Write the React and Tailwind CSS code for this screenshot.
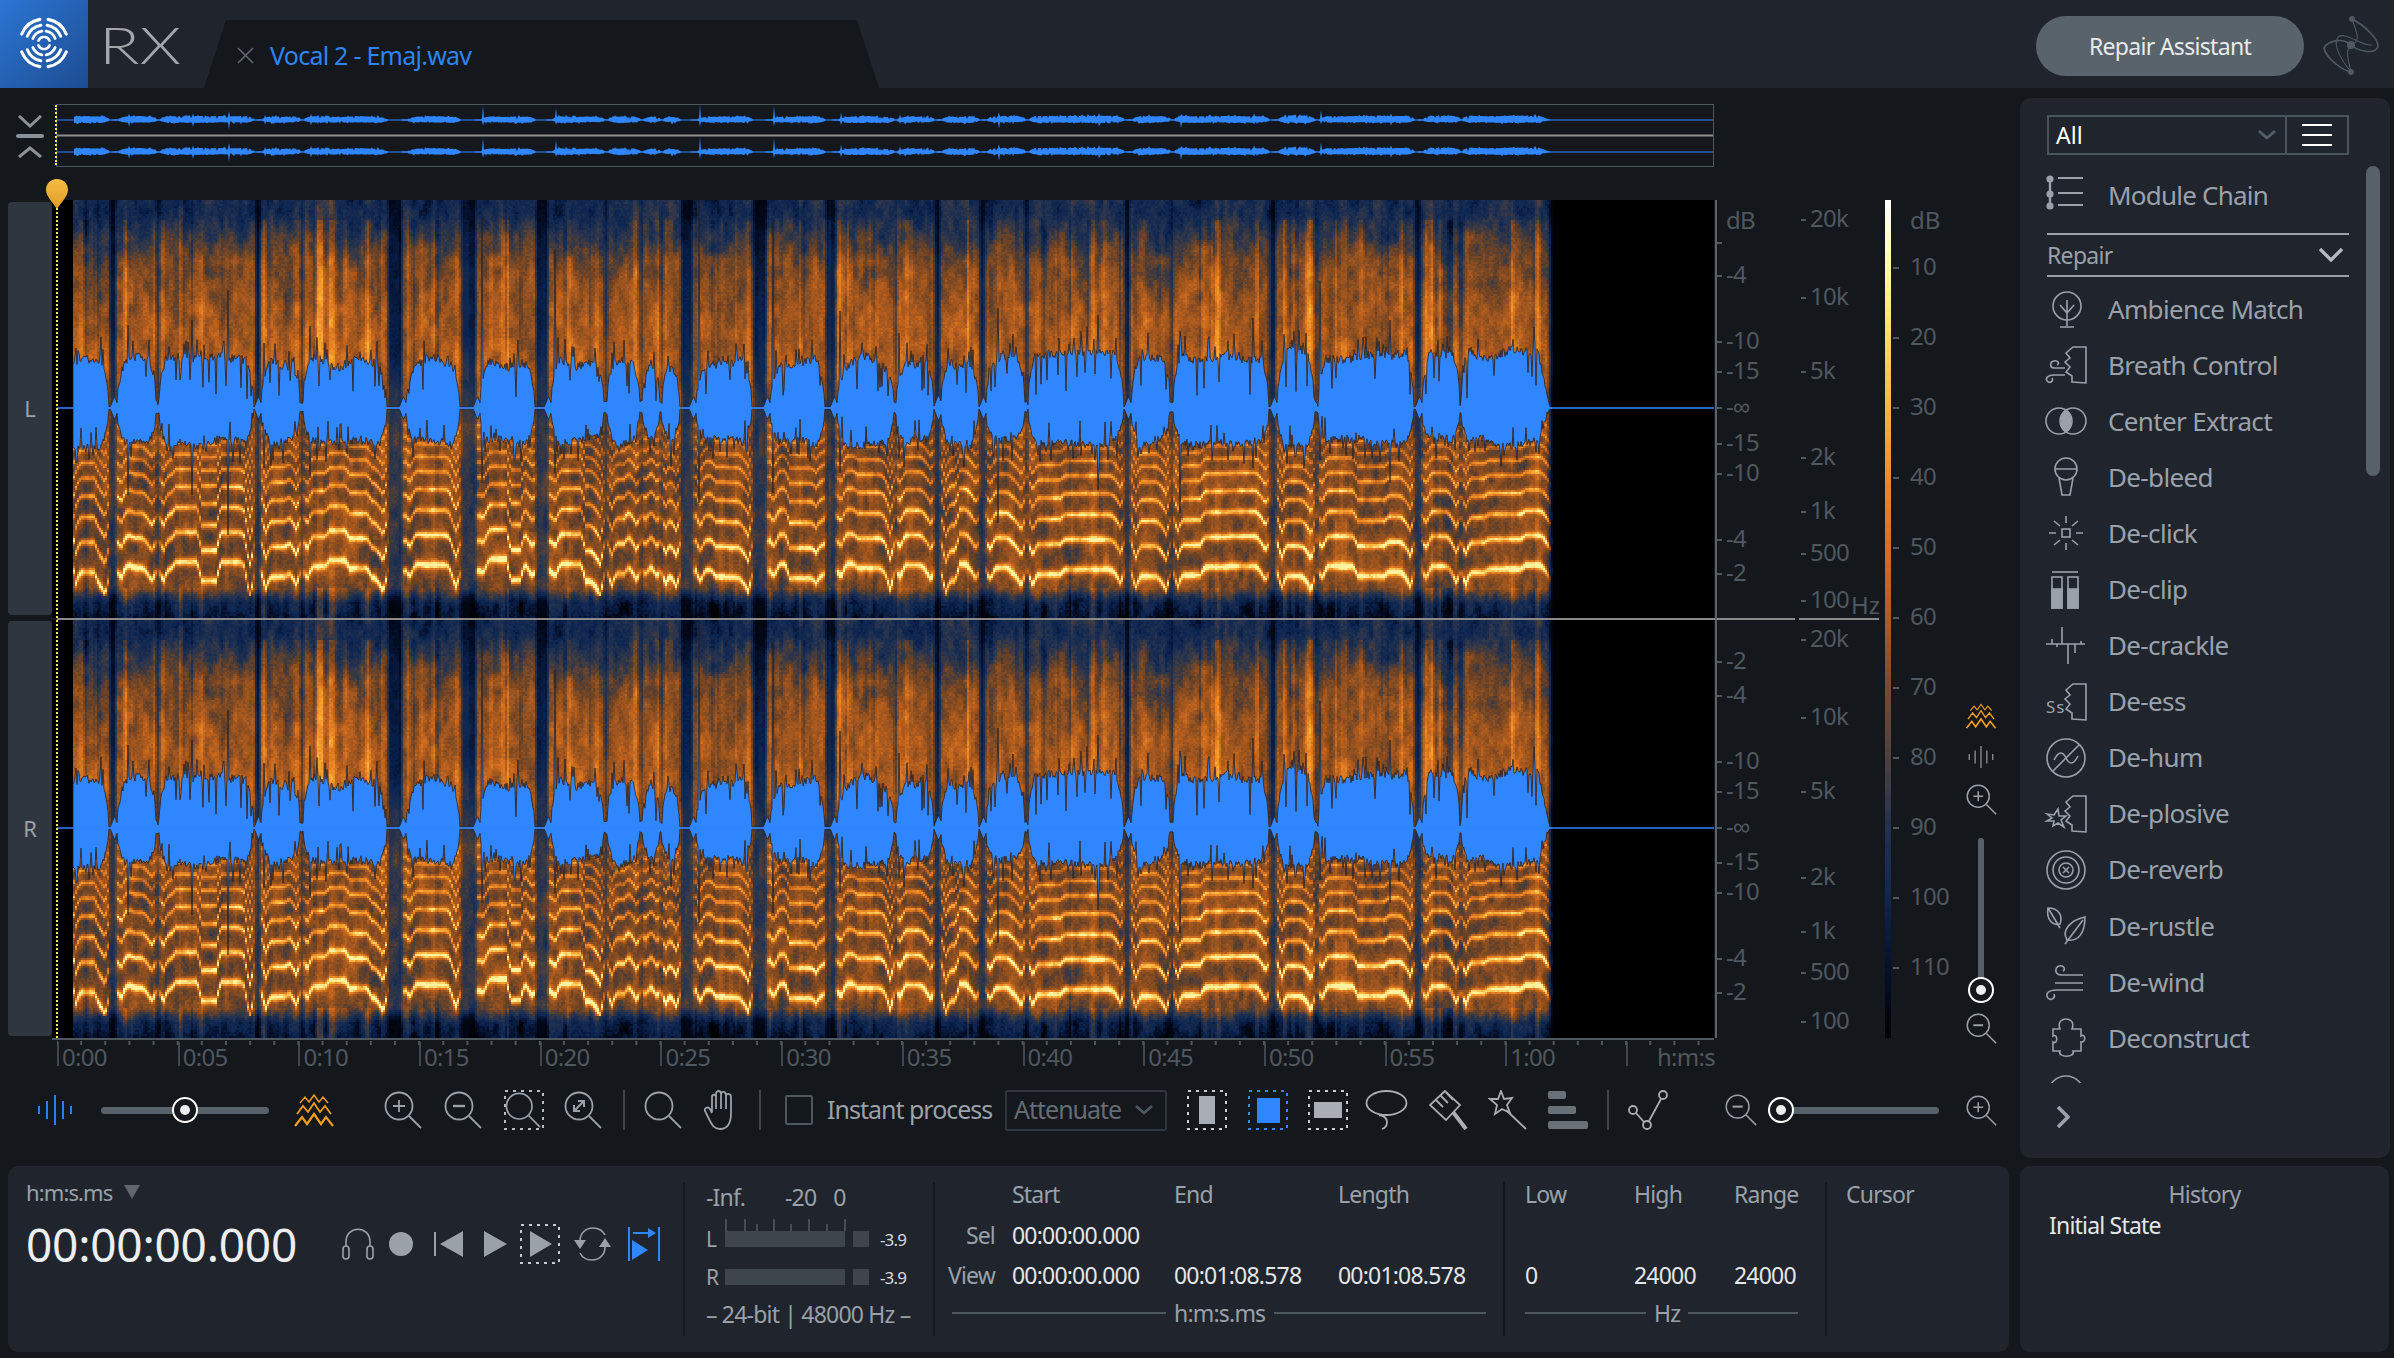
import React from 'react';

// ---------- seeded helpers for the spectrogram drawing ----------
const rnd = (x, y = 0) => {
  const h = Math.sin(x * 127.1 + y * 311.7) * 43758.5453;
  return h - Math.floor(h);
};
const clamp = (v, a = 0, b = 1) => Math.max(a, Math.min(b, v));
const lerp = (a, b, t) => a + (b - a) * t;
const fade = (t) => t * t * (3 - 2 * t);
const noise2 = (x, y) => {
  const xi = Math.floor(x), yi = Math.floor(y);
  const u = fade(x - xi), v = fade(y - yi);
  return lerp(lerp(rnd(xi, yi), rnd(xi + 1, yi), u), lerp(rnd(xi, yi + 1), rnd(xi + 1, yi + 1), u), v);
};

const START = 73;
const END = 1552;
const CENTER = 208;
const CH_H = 418;

// [from, to, depth] dark breaks between sung phrases, in page pixels
const GAPS = [[107,119,1],[154,161,.6],[252,263,1],[298,305,.7],[385,408,1],[458,482,1],[533,553,1],[602,609,.6],[638,644,.6],[658,663,.6],[678,698,1],[750,772,1],[823,839,1],[892,898,.6],[932,943,.9],[977,988,1],[1023,1030,.7],[1122,1133,1],[1168,1175,.7],[1267,1279,1],[1313,1320,.7],[1412,1424,1],[1458,1463,.6]];

// transients: x -> [up, down]
const SPIKES = { 76:[60,55], 128:[83,87], 192:[88,87], 228:[118,127], 264:[65,60], 310:[82,70], 482:[190,75], 555:[158,65], 699:[208,95], 773:[185,85], 840:[97,65], 899:[75,50], 998:[100,115], 1098:[93,82], 1180:[77,105], 1253:[90,60], 1320:[127,52], 1390:[88,75] };

const gapAt = (x) => {
  let g = 0;
  for (const [a, b, d] of GAPS) {
    const hw = (b - a) / 2;
    const c = (a + b) / 2 - hw * 0.2;
    g = Math.max(g, d * clamp((hw * 0.7 + 1 - Math.abs(x - c)) / 4));
  }
  return g;
};

const taperAt = (x) => {
  let t = 1;
  for (const [a, b, d] of GAPS) {
    const c = (a + b) / 2, hw = (b - a) / 2;
    const floor = (1 - d) * 0.35;
    const e = clamp((Math.abs(x - c) - hw + 2) / 8);
    t = Math.min(t, floor + (1 - floor) * Math.sqrt(e));
  }
  t = Math.min(t, clamp((END - 2 - x) / 12), clamp((x - START + 3) / 3));
  return t;
};

const bumpAt = (x) => {
  for (const [a, b, d] of GAPS) {
    if (d >= 0.9 && x > b - 9 && x < b) return 12 * (1 - Math.abs(x - (b - 4.5)) / 4.5);
  }
  return 0;
};

const buildWave = () => {
  const up = [], down = [];
  for (let x = START; x <= END; x++) {
    const s = taperAt(x);
    const r = rnd(x, 3);
    let u = 39 + 13 * noise2(x / 24, 1) + (x > 1000 ? 8 : 0) + (rnd(x, 4) - 0.5) * 9;
    let d = 29 + 10 * noise2(x / 20, 7) + (rnd(x, 5) - 0.5) * 8;
    if (r > 0.82) u += rnd(x, 6) * 24;
    if (r < 0.07) u *= 0.2 + rnd(x, 8) * 0.5;
    if (rnd(x, 9) > 0.84) d += rnd(x, 10) * 22;
    if (rnd(x, 11) < 0.06) d *= 0.3 + rnd(x, 12) * 0.5;
    u = u * s + bumpAt(x);
    d = d * s + bumpAt(x);
    if (SPIKES[x]) { u = SPIKES[x][0]; d = SPIKES[x][1]; }
    up.push(Math.max(u, 1));
    down.push(Math.max(d, 1));
  }
  return { up, down };
};

const buildPitch = () => {
  const pitch = new Float32Array(END + 2);
  const edges = [START, ...GAPS.flatMap(([a, b]) => [a, b]), END];
  for (let i = 0; i < edges.length; i += 2) {
    const a = edges[i], b = edges[i + 1];
    const range = a < 1000 ? 24 : 12;
    let x = a, k = 0;
    while (x < b) {
      const len = (a < 1000 ? 12 : 20) + rnd(a, k) * (a < 1000 ? 20 : 36);
      const p = (rnd(a + 5, k) - 0.5) * range;
      for (let j = x; j < Math.min(b, x + len); j++) pitch[Math.floor(j)] = p;
      x += len; k++;
    }
    for (let j = a; j < b; j++) {
      pitch[j] += 16 * Math.max(0, 1 - (j - a) / 6) + 20 * Math.pow(Math.max(0, 1 - (b - j) / 13), 1.5);
    }
  }
  const out = new Float32Array(END + 2);
  for (let x = START + 2; x < END - 2; x++) {
    out[x] = (pitch[x - 2] + pitch[x - 1] + pitch[x] + pitch[x + 1] + pitch[x + 2]) / 5;
  }
  return out;
};

const HARM = [0, 30, 55, 76, 94, 109, 122, 134, 146];
const AMP = [0.5, 0.45, 0.39, 0.35, 0.31, 0.28, 0.25, 0.22, 0.2];
const WID = [3.8, 3.2, 2.8, 2.4, 2.2, 2, 2, 2, 2];

const STOPS = [[0,'#000000'],[.1,'#020b22'],[.2,'#0b2350'],[.3,'#1f3050'],[.38,'#3c3a42'],[.46,'#6b4226'],[.54,'#93501f'],[.62,'#b85f1e'],[.7,'#d5731f'],[.78,'#ec8a27'],[.86,'#f8a833'],[.93,'#fdd060'],[1,'#fff2a0']];
const hex = (s) => [1, 3, 5].map((i) => parseInt(s.slice(i, i + 2), 16));
const colorAt = (t) => {
  for (let i = 1; i < STOPS.length; i++) {
    if (t <= STOPS[i][0]) {
      const [a, ca] = STOPS[i - 1], [b, cb] = STOPS[i];
      const f = (t - a) / (b - a);
      const A = hex(ca), B = hex(cb);
      return `rgb(${A.map((v, k) => Math.round(lerp(v, B[k], f))).join(',')})`;
    }
  }
  return STOPS[STOPS.length - 1][1];
};

const profile = (y) => {
  if (y < 12) return 0.25;
  if (y < 60) return lerp(0.25, 0.47, (y - 12) / 48);
  if (y < 100) return lerp(0.47, 0.54, (y - 60) / 40);
  if (y < 160) return lerp(0.54, 0.59, (y - 100) / 60);
  if (y < 250) return lerp(0.59, 0.46, (y - 160) / 90);
  if (y < 388) return 0.46;
  if (y < 402) return lerp(0.46, 0.2, (y - 388) / 14);
  return lerp(0.2, 0.12, (y - 402) / 16);
};

const depthAt = (y) => {
  if (y < 150) return 0.68;
  if (y < 240) return lerp(0.68, 0.25, (y - 150) / 90);
  if (y < 385) return 0.25;
  return lerp(0.25, 0.75, clamp((y - 385) / 15));
};

const buildSpectro = () => {
  const streak = new Float32Array(END + 4);
  for (let k = 0; k < 230; k++) {
    const c = START + rnd(k, 21) * (END - START);
    const w = 1 + rnd(k, 22) * 2.2;
    const pick = rnd(k, 23);
    const a = pick > 0.88 ? 0.14 + rnd(k, 24) * 0.08 : pick > 0.3 ? 0.02 + rnd(k, 24) * 0.09 : -0.03 - rnd(k, 25) * 0.08;
    for (let x = Math.floor(c - w * 2); x < c + w * 2; x++) {
      if (x >= 0 && x < END) streak[x] += a * Math.exp(-((x - c) * (x - c)) / (w * w));
    }
  }
  const pitch = buildPitch();
  const N = 40;
  const buckets = Array.from({ length: N }, () => []);
  const CELL = 2;
  for (let y = 0; y < CH_H; y += CELL) {
    let runB = -1, runX = 0;
    for (let x = START; x <= END + CELL; x += CELL) {
      let b = -1;
      if (x < END) {
        const g = gapAt(x);
        let v = profile(y);
        v += 0.15 * (noise2(x / 5, y / 12) - 0.5) + 0.12 * (noise2(x / 16, y / 40 + 9) - 0.5) + 0.07 * (rnd(x, y) - 0.5);
        const sw = y < 20 ? 0.4 : y < 180 ? 1 : y < 388 ? 0.35 : 0.9;
        v += clamp(streak[x], -0.16, 0.22) * sw;
        let h = 0;
        if (y > 215 && y < 395) {
          for (let n = 0; n < HARM.length; n++) {
            const yn = 370 + pitch[x] * (1 - 0.03 * n) - HARM[n];
            const dy = y - yn;
            if (Math.abs(dy) < 20) {
              const am = AMP[n] * (0.8 + 0.35 * noise2(x / 9, n * 5));
              h += am * Math.exp(-(dy * dy) / (WID[n] * WID[n])) + am * 0.18 * Math.exp(-(dy * dy) / (9 * WID[n] * WID[n]));
            }
          }
        }
        v += h * (1 - g) * (1 - g);
        v *= 1 - g * depthAt(y);
        v *= clamp((END - x) / 6);
        b = Math.round(clamp(v) * (N - 1));
      }
      if (b !== runB) {
        if (runB > 0) buckets[runB].push(`M${runX - 52} ${y}h${x - runX}v${CELL}h${runX - x}z`);
        runB = b; runX = x;
      }
    }
  }
  return buckets.map((parts, i) => ({ fill: colorAt(i / (N - 1)), d: parts.join('') })).filter((p) => p.d);
};

const wavePath = (wave, cy, scale, offset) => {
  const { up, down } = wave;
  let d = '';
  for (let i = 0; i < up.length; i++) d += `${i ? 'L' : 'M'}${i + START - offset} ${(cy - up[i] * scale).toFixed(1)}`;
  for (let i = down.length - 1; i >= 0; i--) d += `L${i + START - offset} ${(cy + down[i] * scale).toFixed(1)}`;
  return d + 'z';
};

const WAVE = buildWave();
const SPECTRO = buildSpectro();
const WAVE_MAIN = wavePath(WAVE, CENTER, 1, 52);
const WAVE_TOP = wavePath(WAVE, 15, 0.075, 56);
const WAVE_BOT = wavePath(WAVE, 47, 0.075, 56);

// ---------- small drawings ----------
const Spectro = () => (
  <svg width="1662" height="418" viewBox="0 0 1662 418" className="block bg-black">
    <g shapeRendering="crispEdges">
      {SPECTRO.map((p) => <path key={p.fill} d={p.d} fill={p.fill} />)}
    </g>
    <path d={WAVE_MAIN} fill="#2f86ff" stroke="#2c1c12" strokeWidth="1" strokeOpacity="0.75" />
    <path d={`M5 ${CENTER}H1662`} stroke="#2f86ff" strokeWidth="1.6" />
  </svg>
);

const arc = (r, a0, a1) => {
  const p = (a) => [44 + r * Math.cos(a * Math.PI / 180), 43 - r * Math.sin(a * Math.PI / 180)].map((v) => v.toFixed(2)).join(' ');
  return `M${p(a0)}A${r} ${r} 0 0 ${a1 > a0 ? 0 : 1} ${p(a1)}`;
};

const Logo = () => (
  <svg width="88" height="88" viewBox="0 0 88 88" fill="none" stroke="#fff" strokeLinecap="round">
    {[6, 12, 18, 24].map((r, i) => (
      <g key={r} strokeWidth={2.6 + i * 0.2}>
        <path d={arc(r, 22, 80)} /><path d={arc(r, 100, 158)} />
        <path d={arc(r, -22, -80)} /><path d={arc(r, -100, -158)} />
      </g>
    ))}
  </svg>
);

const Squiggle = () => (
  <svg width="58" height="62" viewBox="0 0 58 62" fill="none" stroke="#4f5a63" strokeWidth="1.6" className="ml-[18px]">
    <circle cx="30" cy="4" r="3" fill="#4f5a63" stroke="none" />
    <circle cx="29" cy="57" r="3" fill="#4f5a63" stroke="none" />
    <circle cx="29" cy="30" r="4" fill="#4f5a63" stroke="none" />
    <path d="M30 4C42 10 57 24 56 32C52 40 36 36 29 30C20 22 6 26 2 33C4 44 22 56 29 57" />
    <path d="M29 57C20 46 10 30 16 22C24 16 40 32 50 30M30 4C34 16 40 26 29 30C22 36 28 50 29 57" strokeWidth="1.1" />
  </svg>
);

const Chev = ({ w = 18, h = 10, up, color = '#8b9199', sw = 2.6 }) => (
  <svg width={w} height={h} viewBox={`0 0 ${w} ${h}`} fill="none" stroke={color} strokeWidth={sw}>
    <path d={up ? `M1 ${h - 1}L${w / 2} 2L${w - 1} ${h - 1}` : `M1 1L${w / 2} ${h - 2}L${w - 1} 1`} />
  </svg>
);

const Mag = ({ size = 38, color = '#9aa1a9', glyph, sw = 1.8 }) => (
  <svg width={size} height={size} viewBox="0 0 38 38" fill="none" stroke={color} strokeWidth={sw}>
    <circle cx="15" cy="15" r="13.5" />
    <path d="M25 25L37 37" />
    {glyph === 'plus' && <path d="M9 15H21M15 9V21" />}
    {glyph === 'minus' && <path d="M9 15H21" strokeWidth="2.4" />}
    {glyph === 'fit' && <path d="M10 20L20 10M14 10H20V16M10 14V20H16" strokeWidth="2" />}
  </svg>
);

const Waves = ({ w = 40, h = 34, color = '#f29d1e' }) => (
  <svg width={w} height={h} viewBox="0 0 40 34" fill="none" stroke={color} strokeWidth="2">
    <path d="M6 10L11 4L15 9L20 2L25 9L29 4L34 10" strokeWidth="1.4" />
    <path d="M3 21L9 13L14 19L20 10L26 19L31 13L37 21" strokeWidth="1.8" />
    <path d="M1 33L8 24L13 31L20 21L27 31L32 24L39 33" strokeWidth="2.2" />
  </svg>
);

const Bars = ({ color = '#2f86ff', w = 34, h = 30 }) => (
  <svg width={w} height={h} viewBox="0 0 34 30" fill="none" stroke={color} strokeWidth="1.8">
    <path d="M1 11V19M9 6V24M17 0V30M25 6V24M33 11V19" />
  </svg>
);

const Slider = ({ width, knob }) => (
  <div className="relative flex items-center h-[26px]" style={{ width }}>
    <div className="h-[7px] w-full rounded-full bg-[#56616a]" />
    <div className="absolute top-0 w-[26px] h-[26px] rounded-full border-2 border-white bg-[#14171c] flex items-center justify-center" style={{ left: knob - 13 }}>
      <div className="w-[10px] h-[10px] rounded-full bg-[#eceef0]" />
    </div>
  </div>
);

const Dotted = ({ color = '#c9ccd0', children }) => (
  <svg width="40" height="40" viewBox="0 0 40 40" fill="none">
    <rect x="1" y="1" width="38" height="38" stroke={color} strokeWidth="2" strokeDasharray="3 5" />
    {children}
  </svg>
);

const stroke = { fill: 'none', stroke: '#9aa1ab', strokeWidth: 1.6 };
const Face = () => <path d="M41 2H28L21 8L25 13L20 17L25 22L21 27L27 31L27 37L41 38Z" {...stroke} />;

const ICONS = {
  module: (
    <g {...stroke} strokeWidth="2">
      <path d="M5 4V34" strokeWidth="2.4" />
      <circle cx="5" cy="4" r="2.6" fill="#9aa1ab" /><circle cx="5" cy="19" r="2.6" fill="#9aa1ab" /><circle cx="5" cy="31" r="2.6" fill="#9aa1ab" />
      <path d="M13 3H38M13 18H38M13 30H38" />
    </g>
  ),
  ambience: (
    <g {...stroke}>
      <circle cx="22" cy="17" r="14" /><path d="M22 11V37M15 38H29M15 16L22 24L29 16" />
    </g>
  ),
  breath: (
    <g {...stroke}>
      <Face />
      <path d="M20 23H9C5 23 4 17 9 16C13 15 15 19 12 20M20 30H9C3 30 0 33 2 36C5 39 9 36 7 33" />
    </g>
  ),
  center: (
    <g {...stroke}>
      <circle cx="14" cy="20" r="13" /><circle cx="28" cy="20" r="13" />
      <path d="M21 9C27 14 27 26 21 31C15 26 15 14 21 9Z" fill="#9aa1ab" />
    </g>
  ),
  bleed: (
    <g {...stroke}>
      <circle cx="21" cy="12" r="11" /><path d="M10 12H32M14 21L17 38H25L28 21" />
    </g>
  ),
  click: (
    <g {...stroke}>
      <rect x="17" y="16" width="8" height="8" />
      <path d="M21 3V10M21 30V37M4 20H11M31 20H38M9 8L15 13M33 8L27 13M9 32L15 27M33 32L27 27" />
    </g>
  ),
  clip: (
    <g {...stroke}>
      <path d="M7 2H33" />
      <rect x="7" y="7" width="10" height="31" /><rect x="23" y="7" width="10" height="31" />
      <rect x="7" y="19" width="10" height="19" fill="#9aa1ab" /><rect x="23" y="19" width="10" height="19" fill="#9aa1ab" />
    </g>
  ),
  crackle: (
    <g {...stroke}>
      <path d="M1 18H40M17 1V18M23 18V38M7 13V18M30 18V27M36 15V18M12 18V21" />
    </g>
  ),
  ess: (
    <g {...stroke}>
      <Face />
      <text x="1" y="31" fontFamily="'Noto Sans',sans-serif" fontSize="17" fill="#9aa1ab" stroke="none" letterSpacing="1">Ss</text>
    </g>
  ),
  hum: (
    <g {...stroke}>
      <circle cx="21" cy="20" r="19" /><path d="M8 33L34 7M9 22C14 12 18 14 21 20C24 26 28 28 33 18" />
    </g>
  ),
  plosive: (
    <g {...stroke}>
      <Face />
      <path d="M2 20L9 21L13 15L14 22L21 22L16 26L19 33L13 29L8 32L9 27L2 27L7 24Z" />
    </g>
  ),
  reverb: (
    <g {...stroke}>
      <circle cx="21" cy="20" r="19" /><circle cx="21" cy="20" r="13" /><circle cx="21" cy="20" r="7" />
      <path d="M18 17L24 23M24 17L18 23" />
    </g>
  ),
  rustle: (
    <g {...stroke}>
      <path d="M3 2C14 2 18 10 15 18C8 20 1 14 3 2ZM3 2L15 22M40 11C40 26 34 36 22 34C16 24 26 14 40 11ZM20 38L38 14" />
    </g>
  ),
  wind: (
    <g {...stroke}>
      <path d="M38 13H16C8 13 10 2 17 4C20 5 20 8 18 9M38 21H10M38 28H12C3 28 0 32 3 36C6 39 11 36 9 32" />
    </g>
  ),
  deconstruct: (
    <g {...stroke}>
      <path d="M8 11H15C12 3 18 1 21 1C24 1 30 3 27 11H36V18C41 15 41 25 36 24V33H28C31 40 12 40 15 33H8V24C13 27 13 15 8 18Z" />
    </g>
  ),
  dialogue: (
    <g {...stroke}><circle cx="21" cy="20" r="18" /></g>
  ),
};

const ModuleIcon = ({ name }) => (
  <svg width="44" height="40" viewBox="0 0 42 40" className="shrink-0">{ICONS[name]}</svg>
);

const MODULES = [
  ['Ambience Match', 'ambience'], ['Breath Control', 'breath'], ['Center Extract', 'center'],
  ['De-bleed', 'bleed'], ['De-click', 'click'], ['De-clip', 'clip'], ['De-crackle', 'crackle'],
  ['De-ess', 'ess'], ['De-hum', 'hum'], ['De-plosive', 'plosive'], ['De-reverb', 'reverb'],
  ['De-rustle', 'rustle'], ['De-wind', 'wind'], ['Deconstruct', 'deconstruct'], ['', 'dialogue'],
];

// axis data: [page y, label, no tick]
const DB_AXIS = [[222,'dB',true],[243,''],[276,'-4'],[342,'-10'],[372,'-15'],[408,'-∞'],[444,'-15'],[474,'-10'],[540,'-4'],[574,'-2'],[662,'-2'],[696,'-4'],[762,'-10'],[792,'-15'],[828,'-∞'],[863,'-15'],[893,'-10'],[959,'-4'],[993,'-2']];
const HZ_AXIS = [[220,'20k'],[298,'10k'],[372,'5k'],[458,'2k'],[512,'1k'],[554,'500'],[601,'100'],[640,'20k'],[718,'10k'],[792,'5k'],[878,'2k'],[932,'1k'],[973,'500'],[1022,'100']];
const SCALE_AXIS = [[268,'10'],[338,'20'],[408,'30'],[478,'40'],[548,'50'],[618,'60'],[688,'70'],[758,'80'],[828,'90'],[898,'100'],[968,'110']];

const Axis = ({ items, tickX, textX, tickW = 5 }) => items.map(([y, label, noTick]) => (
  <React.Fragment key={`${y}${label}`}>
    {!noTick && <div className="absolute h-[2px] bg-[#4f575f]" style={{ left: tickX - 1717, top: y - 201, width: tickW }} />}
    {label !== '' && (
      <div className="absolute leading-none text-[24px] tracking-[-0.03em] text-[#4f575f] -translate-y-1/2 whitespace-nowrap" style={{ left: textX - 1717, top: y - 202 }}>
        {label}
      </div>
    )}
  </React.Fragment>
));

const TIMES = ['0:00','0:05','0:10','0:15','0:20','0:25','0:30','0:35','0:40','0:45','0:50','0:55','1:00','h:m:s'];

const Divider = ({ className = '' }) => <div className={`w-[2px] h-[40px] bg-[#3d444c] ${className}`} />;

const Line = ({ w, ml }) => <div className="h-[2px] bg-[#4f575f]" style={{ width: w, marginLeft: ml }} />;

const T = ({ children, className = '' }) => (
  <div className={`text-[23px] leading-[30px] tracking-[-0.035em] whitespace-nowrap ${className}`}>{children}</div>
);

export default function App() {
  return (
    <div className="w-[2394px] h-[1358px] bg-[#14171c] flex flex-col overflow-hidden font-['Noto_Sans',sans-serif]">
      {/* title bar */}
      <div className="h-[88px] shrink-0 bg-[#20252d] flex items-end">
        <div className="w-[88px] h-[88px] bg-gradient-to-br from-[#2b76d4] to-[#1d4c92] shrink-0"><Logo /></div>
        <div className="w-[116px] h-[88px] pl-[11px] flex items-center">
          <span className="origin-left scale-x-[1.31] text-[51px] leading-none font-['Lato',sans-serif] font-light text-[#a3a7ab]">RX</span>
        </div>
        <div className="w-[675px] h-[68px] bg-[#14171c] [clip-path:polygon(22px_0,653px_0,675px_100%,0_100%)] flex items-center pl-[33px] pt-[3px]">
          <svg width="17" height="17" viewBox="0 0 17 17" stroke="#61686f" strokeWidth="1.6"><path d="M1 1L16 16M16 1L1 16" /></svg>
          <span className="ml-[16px] text-[25px] tracking-[-0.03em] text-[#2e84f0]">Vocal 2 - Emaj.wav</span>
        </div>
        <div className="ml-auto self-center flex items-center pr-[14px] mt-[4px]">
          <div className="w-[268px] h-[60px] rounded-full bg-[#58636b] flex items-center justify-center text-[23px] tracking-[-0.03em] text-[#e8eaec]">Repair Assistant</div>
          <Squiggle />
        </div>
      </div>

      <div className="flex flex-1 min-h-0">
        {/* editor */}
        <div className="w-[2020px] shrink-0 flex flex-col pt-[16px]">
          <div className="flex h-[63px] relative">
            <div className="w-[56px] flex flex-col items-center pl-[3px] pt-[11px]">
              <Chev w={24} h={13} sw={3} />
              <div className="w-[28px] h-[4px] rounded bg-[#8b9199] mt-[6px]" />
              <div className="mt-[8px]"><Chev w={24} h={12} up sw={3} /></div>
            </div>
            <div className="w-[1658px] h-[63px] border border-[#4e565e] relative">
              <svg width="1656" height="61" viewBox="0 0 1656 61" className="block">
                <path d="M0 15H1656M0 47H1656" stroke="#2f86ff" strokeWidth="1.2" />
                <path d="M0 30.5H1656" stroke="#8e8e8e" strokeWidth="2.2" />
                <path d={WAVE_TOP} fill="#2f86ff" />
                <path d={WAVE_BOT} fill="#2f86ff" />
              </svg>
            </div>
            <div className="absolute left-[55px] top-[1px] h-[60px] border-l-2 border-dotted border-[#f5e642]" />
          </div>

          <div className="flex mt-[33px] h-[838px] relative">
            <div className="w-[1715px] shrink-0 flex flex-col">
              <div className="flex h-[418px]">
                <div className="w-[52px] shrink-0 pl-[8px] pt-[2px] pb-[3px]">
                  <div className="h-full rounded-[4px] bg-[#2f363f] flex items-center justify-center text-[22px] text-[#9aa1a9]">L</div>
                </div>
                <Spectro />
              </div>
              <div className="h-[2px] ml-[57px] bg-[#8a8a8a]" />
              <div className="flex h-[418px]">
                <div className="w-[52px] shrink-0 pl-[8px] pt-[1px] pb-[2px]">
                  <div className="h-full rounded-[4px] bg-[#2f363f] flex items-center justify-center text-[22px] text-[#9aa1a9]">R</div>
                </div>
                <Spectro />
              </div>
            </div>

            {/* axes */}
            <div className="relative flex-1 border-l-2 border-[#5a626b]">
              <div className="absolute left-0 top-[418px] w-[78px] h-[2px] bg-[#8a8a8a]" />
              <div className="absolute left-[82px] top-[418px] w-[80px] h-[2px] bg-[#8a8a8a]" />
              <Axis items={DB_AXIS} tickX={1717} textX={1726} />
              <Axis items={HZ_AXIS} tickX={1801} textX={1810} />
              <div className="absolute left-[134px] top-[393px] text-[24px] leading-none text-[#4f575f]">Hz</div>
              <div className="absolute left-[168px] top-0 w-[6px] h-[838px] bg-[linear-gradient(180deg,#ffffff_0%,#fffdb8_6%,#ffef80_12%,#fcd860_17%,#f6b240_25%,#ee8a2e_33%,#d96a24_42%,#b05a25_50%,#7a4a30_58%,#4a4040_67%,#24304f_75%,#0f2750_83%,#05102a_92%,#000000_100%)]" />
              <Axis items={SCALE_AXIS} tickX={1893} textX={1910} tickW={6} />
              <div className="absolute left-[193px] top-[20px] -translate-y-1/2 text-[24px] leading-none text-[#4f575f]">dB</div>

              {/* vertical zoom */}
              <div className="absolute left-[248px] top-[503px] w-[32px] flex flex-col items-center">
                <Waves w={32} h={26} />
                <div className="mt-[17px]"><Bars color="#8a9098" w={28} h={22} /></div>
                <div className="mt-[16px]"><Mag size={31} glyph="plus" /></div>
                <div className="relative w-[6px] h-[152px] mt-[23px] rounded-full bg-[#56616a]">
                  <div className="absolute left-[-10px] top-[139px] w-[26px] h-[26px] rounded-full border-2 border-white bg-[#14171c] flex items-center justify-center">
                    <div className="w-[10px] h-[10px] rounded-full bg-[#eceef0]" />
                  </div>
                </div>
                <div className="mt-[23px]"><Mag size={31} glyph="minus" /></div>
              </div>
            </div>

            {/* playhead */}
            <svg width="22" height="30" viewBox="0 0 22 30" className="absolute left-[46px] top-[-21px]">
              <defs><linearGradient id="ph" x1="0" y1="0" x2="0" y2="1"><stop offset="0" stopColor="#f6bd44" /><stop offset="1" stopColor="#de9a28" /></linearGradient></defs>
              <path d="M11 0C18 0 22 5 22 11C22 17 15 24 11 30C7 24 0 17 0 11C0 5 4 0 11 0Z" fill="url(#ph)" />
            </svg>
            <div className="absolute left-[56px] top-[8px] h-[830px] border-l-2 border-dotted border-[#f8ec3a]" />
          </div>

          {/* time ruler */}
          <div className="w-[1714px] h-[40px] relative shrink-0">
            <div className="ml-[52px] h-[2px] bg-[#4e565e]" />
            <svg width="1660" height="6" viewBox="0 0 1660 6" className="absolute left-[57px] top-[3px]">
              <path d={Array.from({ length: 69 }, (_, i) => `M${i * 24.14} 0V4`).join('')} stroke="#4f575f" strokeWidth="2" />
            </svg>
            <div className="flex pl-[57px] pt-[2px]">
              {TIMES.map((t) => (
                <div key={t} className="w-[120.7px] h-[24px] border-l-2 border-[#3f464e] shrink-0 overflow-visible">
                  <div className="pl-[3px] pt-[3px] text-[24px] leading-[24px] tracking-[-0.03em] text-[#4f575f] whitespace-nowrap">{t === 'h:m:s' ? <span className="ml-[26px]">{t}</span> : t}</div>
                </div>
              ))}
            </div>
          </div>

          {/* tools */}
          <div className="flex items-center h-[46px] mt-[9px] pl-[38px]">
            <Bars />
            <div className="ml-[29px]"><Slider width={168} knob={84} /></div>
            <div className="ml-[25px]"><Waves /></div>
            <div className="ml-[50px]"><Mag glyph="plus" /></div>
            <div className="ml-[22px]"><Mag glyph="minus" /></div>
            <div className="ml-[22px] relative w-[39px] h-[40px]">
              <Dotted color="#b9bdc2" />
              <div className="absolute left-[1px] top-[2px]"><Mag size={36} /></div>
            </div>
            <div className="ml-[21px]"><Mag glyph="fit" /></div>
            <Divider className="ml-[21px]" />
            <div className="ml-[19px]"><Mag /></div>
            <svg width="34" height="40" viewBox="0 0 34 40" fill="none" stroke="#9aa1a9" strokeWidth="1.8" className="ml-[22px]">
              <path d="M8 22V7C8 4 12 4 12 7V4C12 0 17 0 17 4V4C17 1 22 1 22 5V6C22 3 27 3 27 7V23C27 33 24 39 16 39C10 39 8 35 5 29L1 21C0 18 4 16 6 19L8 23M12 7V19M17 4V19M22 6V19" />
            </svg>
            <Divider className="ml-[21px]" />
            <div className="ml-[24px] w-[28px] h-[30px] border-2 border-[#4e565e] rounded-[2px]" />
            <div className="ml-[14px] w-[167px] text-[25px] tracking-[-0.04em] text-[#9aa1a9] whitespace-nowrap">Instant process</div>
            <div className="ml-[11px] w-[162px] h-[41px] border-2 border-[#30363d] rounded-[3px] flex items-center justify-between pl-[7px] pr-[12px] text-[25px] tracking-[-0.04em] text-[#656c74]">
              Attenuate
              <Chev w={18} h={10} color="#4f575f" />
            </div>
            <div className="ml-[20px]">
              <Dotted><rect x="12" y="6" width="16" height="28" fill="#a9aeb4" /></Dotted>
            </div>
            <div className="ml-[21px]">
              <Dotted color="#2f86ff"><rect x="9" y="8" width="23" height="25" fill="#2f86ff" /></Dotted>
            </div>
            <div className="ml-[20px]">
              <Dotted><rect x="6" y="12" width="28" height="16" fill="#a9aeb4" /></Dotted>
            </div>
            <svg width="43" height="40" viewBox="0 0 43 40" fill="none" stroke="#a9aeb4" strokeWidth="1.8" className="ml-[17px]">
              <ellipse cx="21.5" cy="13" rx="20" ry="12" /><path d="M14 25C20 26 22 29 22 32C22 35 20 38 17 39" />
            </svg>
            <svg width="39" height="40" viewBox="0 0 39 40" fill="none" stroke="#a9aeb4" strokeWidth="1.8" className="ml-[21px]">
              <path d="M16 1L1 15L17 30L31 15ZM7 10L14 17M12 6L19 13M17 2.5L24 10" /><path d="M24 22L37 39" strokeWidth="4" />
            </svg>
            <svg width="40" height="40" viewBox="0 0 40 40" fill="none" stroke="#a9aeb4" strokeWidth="1.8" className="ml-[20px]">
              <path d="M13 1L16 9L24 8L19 15L22 23L14 19L7 24L9 15L2 9L10 9Z" /><path d="M18 20L38 39" />
            </svg>
            <div className="ml-[20px] w-[40px] flex flex-col gap-[7px]">
              <div className="w-[18px] h-[8px] rounded-[2px] bg-[#6a7077]" />
              <div className="w-[28px] h-[8px] rounded-[2px] bg-[#6a7077]" />
              <div className="w-[40px] h-[8px] rounded-[2px] bg-[#6a7077]" />
            </div>
            <Divider className="ml-[19px]" />
            <svg width="40" height="40" viewBox="0 0 40 40" fill="none" stroke="#a9aeb4" strokeWidth="1.8" className="ml-[19px]">
              <circle cx="35" cy="5" r="4" /><circle cx="19" cy="35" r="4" /><circle cx="5" cy="20" r="4" /><path d="M33 9L21 31M8 23L16 32" />
            </svg>
            <div className="ml-[57px]"><Mag size={32} glyph="minus" /></div>
            <div className="ml-[11px]"><Slider width={171} knob={13} /></div>
            <div className="ml-[27px]"><Mag size={31} glyph="plus" /></div>
          </div>
        </div>

        {/* module list */}
        <div className="w-[370px] mt-[10px] rounded-[10px] bg-[#20252d] relative flex flex-col pl-[24px] pt-[17px]">
          <div className="ml-[3px] w-[302px] h-[40px] border-2 border-[#4a535c] flex items-stretch shrink-0">
            <div className="w-[238px] border-r-2 border-[#4a535c] flex items-center justify-between pl-[7px] pr-[9px] text-[23px] text-white">
              All
              <Chev w={18} h={10} color="#55606a" />
            </div>
            <div className="flex-1 flex flex-col items-center justify-center gap-[8px]">
              <div className="w-[30px] h-[2px] bg-white" /><div className="w-[30px] h-[2px] bg-white" /><div className="w-[30px] h-[2px] bg-white" />
            </div>
          </div>
          <div className="flex items-center h-[40px] mt-[20px] shrink-0">
            <ModuleIcon name="module" />
            <span className="ml-[20px] text-[26px] tracking-[-0.03em] text-[#9aa1ab]">Module Chain</span>
          </div>
          <div className="ml-[3px] w-[302px] h-[44px] mt-[18px] border-y-2 border-[#9aa1ab] flex items-center justify-between pr-[6px] text-[23px] tracking-[-0.03em] text-[#9aa1ab] shrink-0">
            Repair
            <Chev w={24} h={14} color="#b4b9c0" sw={3.4} />
          </div>
          <div className="h-[802px] mt-[4px] overflow-hidden">
            {MODULES.map(([name, icon]) => (
              <div key={icon} className="h-[56.1px] flex items-center">
                <ModuleIcon name={icon} />
                {name && <span className="ml-[20px] text-[26px] tracking-[-0.025em] text-[#9aa1ab] whitespace-nowrap">{name}</span>}
              </div>
            ))}
          </div>
          <div className="mt-[23px] ml-[12px]">
            <svg width="14" height="22" viewBox="0 0 14 22" fill="none" stroke="#9aa1ab" strokeWidth="3.6"><path d="M2 1L12 11L2 21" /></svg>
          </div>
          <div className="absolute left-[346px] top-[68px] w-[14px] h-[310px] rounded-full bg-[#56616a]" />
        </div>
      </div>

      {/* bottom row */}
      <div className="flex h-[186px] mt-[8px] mb-[6px] pl-[8px] shrink-0 text-[#9aa1a9]">
        <div className="w-[2001px] rounded-[10px] bg-[#20252d] flex py-[16px]">
          <div className="w-[677px] pl-[18px] border-r-2 border-[#14171c]">
            <div className="flex items-center h-[26px] -mt-[3px] text-[22px] tracking-[-0.04em]">
              h:m:s.ms
              <svg width="16" height="14" viewBox="0 0 16 14" className="ml-[12px]"><path d="M0 0H16L8 14Z" fill="#5f666d" /></svg>
            </div>
            <div className="flex items-center h-[52px] mt-[13px]">
              <div className="w-[268px] text-[46px] leading-none tracking-[-0.005em] text-[#eceef0] whitespace-nowrap">00:00:00.000</div>
              <svg width="32" height="32" viewBox="0 0 32 32" fill="none" stroke="#9aa1a9" strokeWidth="1.6" className="ml-[48px]">
                <path d="M4 18V14C4 -3 28 -3 28 14V18" /><rect x="1" y="18" width="6" height="13" rx="3" /><rect x="25" y="18" width="6" height="13" rx="3" />
              </svg>
              <div className="ml-[15px] w-[24px] h-[24px] rounded-full bg-[#9aa1a9]" />
              <svg width="29" height="26" viewBox="0 0 29 26" fill="#9aa1a9" className="ml-[21px]"><path d="M0 1H2V25H0ZM29 0V26L6 13Z" /></svg>
              <svg width="23" height="26" viewBox="0 0 23 26" fill="#9aa1a9" className="ml-[21px]"><path d="M0 0L23 13L0 26Z" /></svg>
              <div className="ml-[13px]"><Dotted><path d="M10 7L32 20L10 33Z" fill="#9aa1a9" /></Dotted></div>
              <svg width="37" height="34" viewBox="0 0 37 34" fill="none" stroke="#9aa1a9" strokeWidth="1.6" className="ml-[14px]">
                <path d="M6 14C6 6 12 1 19 1C25 1 29 4 31 8M31 20C31 28 25 33 18 33C12 33 8 30 6 26" />
                <path d="M0 13H12L6 22ZM25 20H37L31 11Z" fill="#9aa1a9" stroke="none" />
              </svg>
              <svg width="32" height="34" viewBox="0 0 32 34" fill="none" stroke="#2f86ff" strokeWidth="2" className="ml-[17px]">
                <path d="M1 0V34M31 0V34M5 6H24" /><path d="M20 1L28 6L20 11Z" fill="#2f86ff" stroke="none" /><path d="M4 13L20 23L4 33Z" fill="#2f86ff" stroke="none" />
              </svg>
            </div>
          </div>

          <div className="w-[250px] pl-[21px] border-r-2 border-[#14171c]">
            <div className="flex h-[32px] items-center -mt-[1px] mb-[1px]">
              <T>-Inf.</T><T className="ml-[40px]">-20</T><T className="ml-[17px]">0</T>
            </div>
            <svg width="140" height="12" viewBox="0 0 140 12" className="ml-[19px] mt-[6px] block">
              <path d="M1 0V12M20 0V12M49 0V12M84 0V12M120 0V12M32 5V12M66 5V12M102 5V12" stroke="#50575f" strokeWidth="1.6" />
            </svg>
            {['L', 'R'].map((c, i) => (
              <div key={c} className={`flex items-center h-[16px] ${i ? 'mt-[22px]' : ''}`}>
                <div className="w-[19px] text-[21px] leading-none">{c}</div>
                <div className="w-[120px] h-[16px] bg-[#3e454d]" />
                <div className="w-[16px] h-[16px] ml-[8px] bg-[#3e454d]" />
                <div className="ml-[11px] text-[17px] leading-none tracking-[-0.05em] text-[#d8dadc]">-3.9</div>
              </div>
            ))}
            <T className="mt-[14px] text-[21px] leading-[24px]">– 24-bit | 48000 Hz –</T>
          </div>

          <div className="w-[570px] border-r-2 border-[#14171c]">
            <div className="grid grid-cols-[77px_162px_164px_1fr] gap-y-[10.5px] w-[570px] -mt-[3px]">
              <div /><T>Start</T><T>End</T><T>Length</T>
              <T className="text-right pr-[17px]">Sel</T><T className="text-[#e4e6e8]">00:00:00.000</T><div /><div />
              <T className="text-right pr-[17px]">View</T><T className="text-[#e4e6e8]">00:00:00.000</T><T className="text-[#e4e6e8]">00:01:08.578</T><T className="text-[#e4e6e8]">00:01:08.578</T>
            </div>
            <div className="flex items-center h-[24px] mt-[10.5px]">
              <Line w={214} ml={17} />
              <T className="ml-[8px] w-[92px] leading-[24px]">h:m:s.ms</T>
              <Line w={212} ml={8} />
            </div>
          </div>

          <div className="w-[322px] pl-[20px] border-r-2 border-[#14171c]">
            <div className="grid grid-cols-[109px_100px_1fr] gap-y-[10.5px] -mt-[3px]">
              <T>Low</T><T>High</T><T>Range</T>
              <div className="h-[30px]" /><div /><div />
              <T className="text-[#e4e6e8]">0</T><T className="text-[#e4e6e8]">24000</T><T className="text-[#e4e6e8]">24000</T>
            </div>
            <div className="flex items-center h-[24px] mt-[10.5px]">
              <Line w={121} ml={0} />
              <T className="ml-[8px] w-[25px] leading-[24px]">Hz</T>
              <Line w={110} ml={9} />
            </div>
          </div>

          <div className="pl-[19px] -mt-[3px]"><T>Cursor</T></div>
        </div>

        <div className="w-[369px] ml-[11px] rounded-[10px] bg-[#20252d] pt-[13px]">
          <T className="text-center">History</T>
          <T className="mt-[1px] pl-[29px] text-[#e4e6e8]">Initial State</T>
        </div>
      </div>
    </div>
  );
}
